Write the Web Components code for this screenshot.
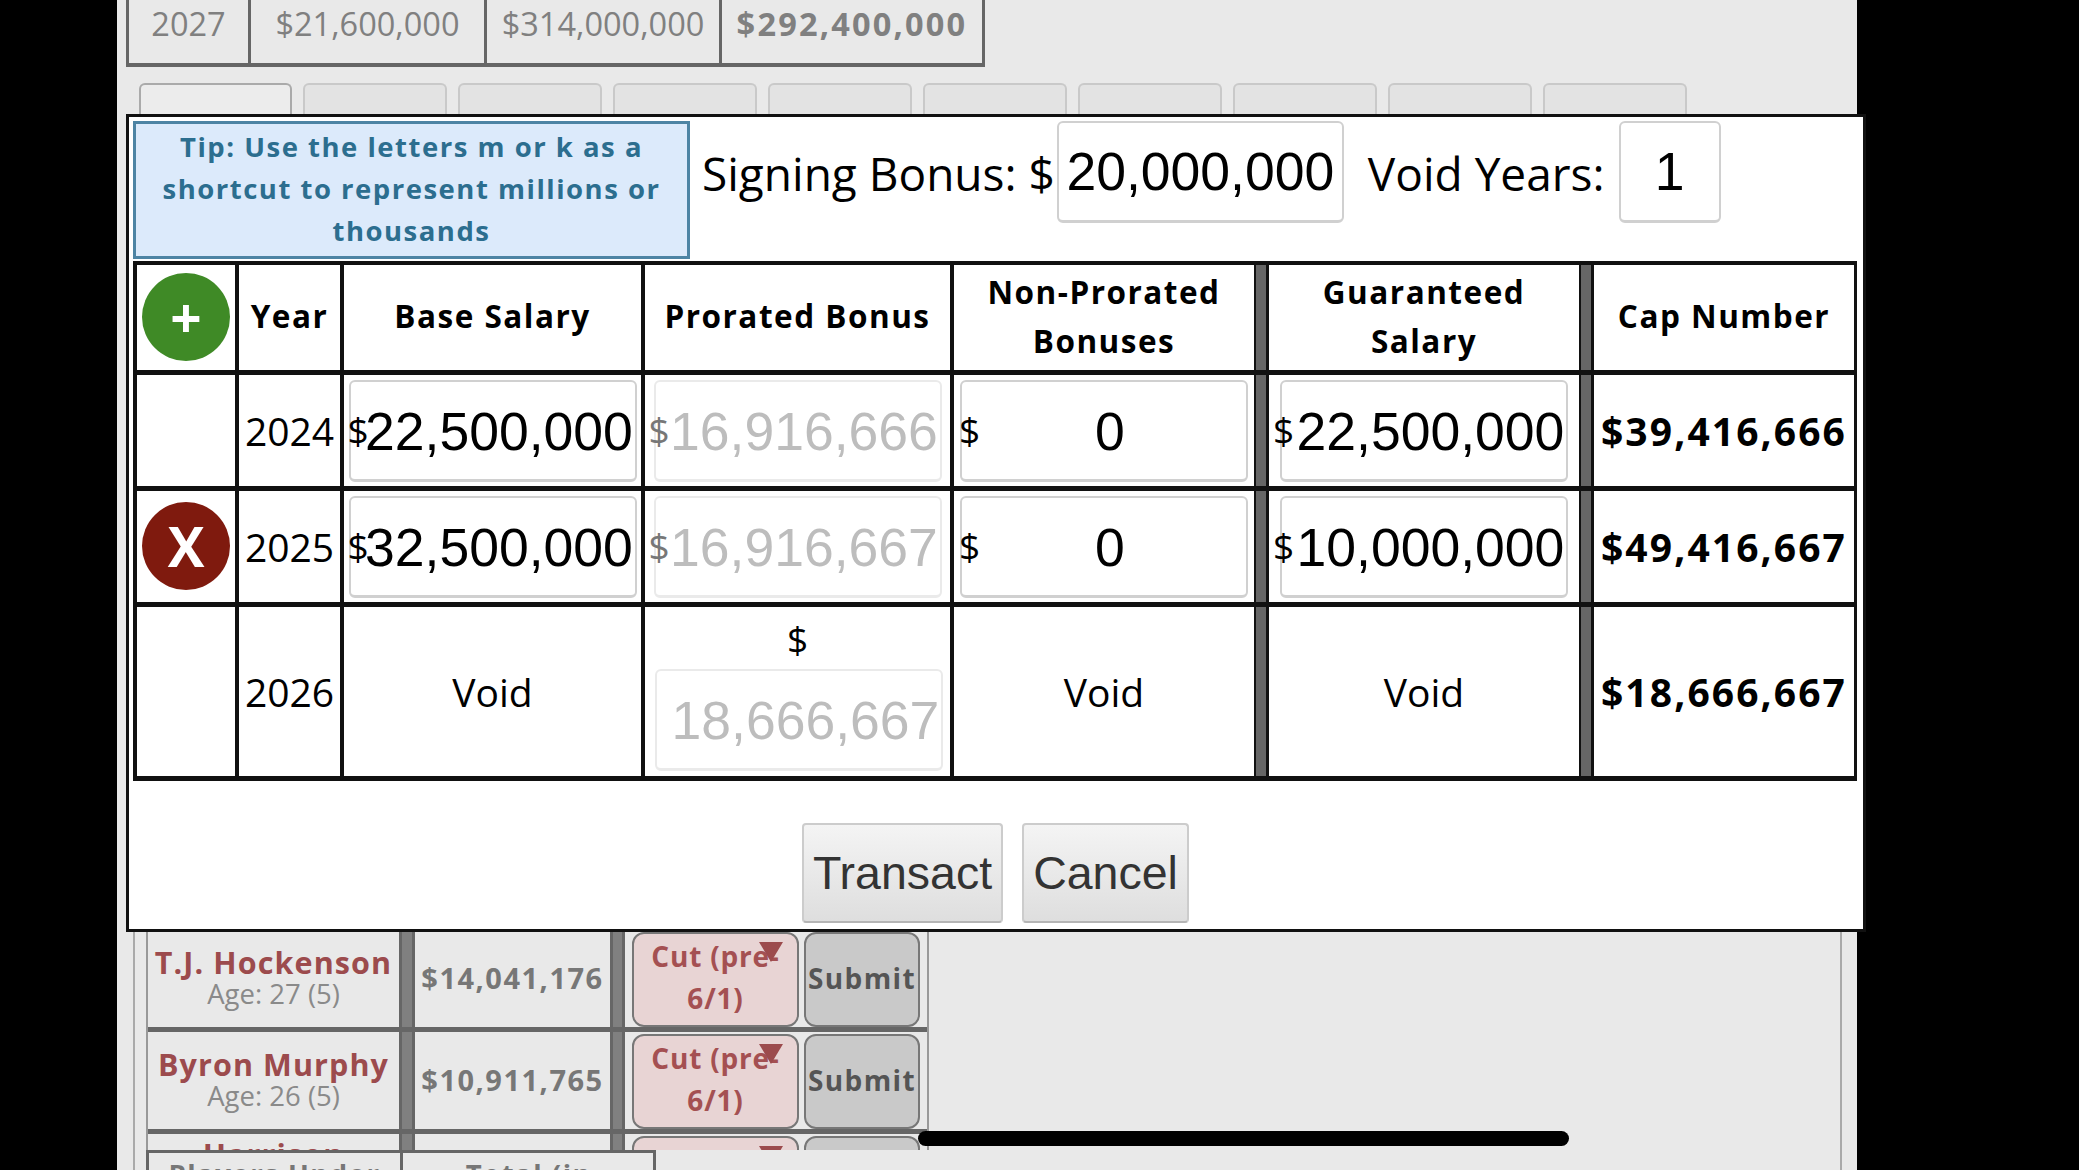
<!DOCTYPE html>
<html>
<head>
<meta charset="utf-8">
<title>Contract editor</title>
<style>
  html, body { margin: 0; height: 100%; background: #000; overflow: hidden; }
  body { font-family: "Open Sans", sans-serif; }
</style>
</head>
<body>
<cap-page>
  <cap-summary slot="summary"></cap-summary>
  <cap-tabs slot="tabs"></cap-tabs>
  <player-list slot="list">
    <player-row name="T.J. Hockenson" age="Age: 27 (5)" salary="$14,041,176"></player-row>
    <player-row name="Byron Murphy" age="Age: 26 (5)" salary="$10,911,765"></player-row>
    <player-row name="Harrison"></player-row>
  </player-list>
  <contract-modal slot="modal">
    <contract-row kind="head">
      <round-button color="#3f8a26" label="+"></round-button>
      <b>Year</b><b>Base Salary</b><b>Prorated Bonus</b><b>Non-Prorated Bonuses</b><i></i><b>Guaranteed Salary</b><i></i><b>Cap Number</b>
    </contract-row>
    <contract-row>
      <span></span><span>2024</span>
      <money-input value="22,500,000"></money-input>
      <money-input value="16,916,666" disabled nudge="4"></money-input>
      <money-input value="0"></money-input><i></i>
      <money-input value="22,500,000" nudge="6"></money-input><i></i>
      <strong>$39,416,666</strong>
    </contract-row>
    <contract-row>
      <round-button color="#7f1a0e" label="X"></round-button><span>2025</span>
      <money-input value="32,500,000"></money-input>
      <money-input value="16,916,667" disabled nudge="4"></money-input>
      <money-input value="0"></money-input><i></i>
      <money-input value="10,000,000" nudge="6"></money-input><i></i>
      <strong>$49,416,667</strong>
    </contract-row>
    <contract-row kind="void">
      <span></span><span>2026</span><span>Void</span>
      <money-input value="18,666,667" disabled stacked></money-input>
      <span>Void</span><i></i><span>Void</span><i></i>
      <strong>$18,666,667</strong>
    </contract-row>
  </contract-modal>
</cap-page>

<script>
  // outer page: dimmed sheet behind the modal, black bars either side
  class CapPage extends HTMLElement {
    constructor() {
      super();
      this.attachShadow({ mode: "open" });
      this.shadowRoot.innerHTML = `
<style>
:host { display: block; position: relative; width: 1740px; height: 1170px; margin-left: 117px; }
.wrap { display: flex; flex-direction: column; height: 100%; background: #e9e9e9; overflow: hidden; }
.pill { position: absolute; left: 801px; top: 1131px; width: 651px; height: 15px; border-radius: 8px; background: #000; }
</style>
<div class="wrap">
  <slot name="summary"></slot>
  <slot name="tabs"></slot>
  <slot name="list"></slot>
</div>
<slot name="modal"></slot>
<div class="pill"></div>`;
    }
  }

  class CapSummary extends HTMLElement {
    constructor() {
      super();
      this.attachShadow({ mode: "open" });
      this.shadowRoot.innerHTML = `
<style>
:host { display: grid; grid-template-columns: 122px 236px 235px 1fr; width: 859px; height: 67px; flex: none; margin-left: 9px; box-sizing: border-box; border-bottom: 4px solid #666; border-left: 3px solid #666; border-right: 3px solid #666; color: #808080; font-size: 32.5px; }
div { display: flex; justify-content: center; padding-bottom: 16px; align-items: center; border-right: 3px solid #666; }
div:last-child { border-right: 0; font-weight: 700; letter-spacing: 2.2px; }
</style>
<div>2027</div><div>$21,600,000</div><div>$314,000,000</div><div>$292,400,000</div>`;
    }
  }

  class CapTabs extends HTMLElement {
    constructor() {
      super();
      this.attachShadow({ mode: "open" });
      let tabs = "";
      for (let i = 0; i < 10; i++) tabs += `<div class="${i == 0 ? "on" : ""}"></div>`;
      this.shadowRoot.innerHTML = `
<style>
:host { display: flex; flex: none; gap: 12px; height: 31px; margin: 16px 0 0 22px; }
div { width: 144px; height: 31px; box-sizing: border-box; background: #e3e3e3; border: 2px solid #c9c9c9; border-bottom: 0; border-radius: 6px 6px 0 0; margin-right: -1px; }
.on { width: 153px; background: #ececec; border-color: #aaa; }
</style>${tabs}`;
    }
  }

  class PlayerList extends HTMLElement {
    constructor() {
      super();
      this.attachShadow({ mode: "open" });
      this.shadowRoot.innerHTML = `
<style>
:host { display: block; position: relative; flex: 1; margin: 0 15px 0 16px; border-left: 2px solid #aaa; border-right: 2px solid #aaa; overflow: hidden; }
.tbl { width: 783px; margin-left: 11px; padding-top: 816px; box-sizing: border-box; border-right: 2px solid #999; border-left: 2px solid #999; }
.foot { position: absolute; left: 11px; right: 0; top: 1036px; bottom: 0; background: #e9e9e9; }
.foot div { display: grid; grid-template-columns: 251px 255px; width: 510px; box-sizing: border-box; border: 3px solid #666; border-bottom: 0; height: 30px; color: #777; font-weight: 700; font-size: 27.5px; letter-spacing: 1.5px; }
.foot span { text-align: center; white-space: nowrap; overflow: hidden; line-height: 42px; height: 30px; }
.foot span + span { border-left: 3px solid #666; }
</style>
<div class="tbl"><slot></slot></div>
<div class="foot"><div><span>Players Under</span><span>Total (in</span></div></div>`;
    }
  }

  class PlayerRow extends HTMLElement {
    constructor() {
      super();
      this.attachShadow({ mode: "open" });
      // the last row runs under the sticky footer, only its top shows
      const full = this.hasAttribute("salary");
      this.shadowRoot.innerHTML = `
<style>
:host { display: grid; grid-template-columns: 251px 16px 195px 15px 1fr; height: 97px; padding-bottom: 5px; background: linear-gradient(#666, #666) bottom / 100% 5px no-repeat; color: #777; }
.who { display: flex; flex-direction: column; align-items: center; justify-content: ${full ? "center" : "flex-start"}; padding: ${full ? "0 0 4px" : "3px 0 0"}; }
.who b { color: #9c4b4d; font-size: 30.5px; line-height: 34px; letter-spacing: 1.1px; white-space: nowrap; }
.who span { color: #8a8a8a; font-size: 27.5px; line-height: 30px; }
.bar { background: #808080; border-left: 3px solid #666; border-right: 3px solid #666; box-sizing: border-box; }
.sal { display: flex; align-items: center; justify-content: center; font-weight: 700; font-size: 29px; letter-spacing: 1.5px; padding-bottom: 2px; }
.act { display: flex; gap: 5px; padding: 2px 0 0 7px; }
.sel { position: relative; width: 167px; box-sizing: border-box; background: #e8d4d4; border: 2px solid #777; border-radius: 12px; color: #a45052; font-weight: 700; font-size: 28px; line-height: 42px; text-align: center; letter-spacing: .8px; padding-top: 1px; }
.sel::after { content: ""; position: absolute; right: 14px; top: 8px; border: 12px solid transparent; border-top: 20px solid #9c4b4d; border-bottom: 0; }
.sub { width: 116px; box-sizing: border-box; background: #c9c9c9; border: 2px solid #777; border-radius: 12px; color: #555; font-weight: 700; font-size: 28px; letter-spacing: 1.4px; display: flex; align-items: center; justify-content: center; padding-bottom: 4px; }
</style>
<div class="who"><b>${this.getAttribute("name")}</b>${full ? `<span>${this.getAttribute("age")}</span>` : ""}</div>
<div class="bar"></div>
<div class="sal">${full ? this.getAttribute("salary") : ""}</div>
<div class="bar"></div>
<div class="act"><div class="sel">${full ? "Cut (pre-6/1)" : ""}</div><div class="sub">${full ? "Submit" : ""}</div></div>`;
    }
  }

  // the modal sits over the sheet
  class ContractModal extends HTMLElement {
    constructor() {
      super();
      this.attachShadow({ mode: "open" });
      this.shadowRoot.innerHTML = `
<style>
:host { display: flex; flex-direction: column; position: absolute; left: 9px; top: 114px; width: 1740px; height: 818px; box-sizing: border-box; background: #fff; border: 3px solid #111; padding: 4px 8px 0 4px; color: #000; }
.top { display: flex; align-items: flex-start; height: 140px; }
.tip { width: 557px; height: 138px; box-sizing: border-box; background: #dceafb; border: 3px solid #4d84a4; color: #2c6e8f; font-weight: 700; font-size: 27.5px; letter-spacing: 1.5px; line-height: 42px; text-align: center; padding: 2px 8px 0; }
.lbl { font-size: 46px; margin: 0; line-height: 104px; white-space: nowrap; }
.box { box-sizing: border-box; height: 102px; border: 2px solid #d0d0d0; border-bottom-width: 3px; border-radius: 6px; font-family: "Liberation Sans", Arial, sans-serif; font-size: 53.5px; display: flex; align-items: center; justify-content: center; }
.tbl { border: 4px solid #111; border-right-width: 3px; border-bottom: 0; width: 1724px; box-sizing: border-box; }
.btns { display: flex; justify-content: center; gap: 19px; margin-top: 42px; padding-left: 3px; }
.btn { box-sizing: border-box; height: 100px; display: flex; align-items: center; justify-content: center; background: linear-gradient(#f4f4f4, #dedede); border: 2px solid #ccc; border-bottom-color: #b5b5b5; border-radius: 4px; font-family: "Liberation Sans", Arial, sans-serif; font-size: 46.5px; color: #333; }
</style>
<div class="top">
  <div class="tip">Tip: Use the letters m or k as a shortcut to represent millions or thousands</div>
  <div class="lbl" style="margin-left:12px">Signing Bonus: $</div>
  <div class="box" style="width:287px;margin-left:2px">20,000,000</div>
  <div class="lbl" style="margin-left:24px">Void Years:</div>
  <div class="box" style="width:102px;margin-left:14px">1</div>
</div>
<div class="tbl"><slot></slot></div>
<div class="btns"><div class="btn" style="width:201px">Transact</div><div class="btn" style="width:167px">Cancel</div></div>`;
    }
  }

  class ContractRow extends HTMLElement {
    constructor() {
      super();
      this.attachShadow({ mode: "open" });
      const kind = this.getAttribute("kind");
      const h = kind == "head" ? 110 : kind == "void" ? 174 : 116;
      this.shadowRoot.innerHTML = `
<style>
:host { display: grid; grid-template-columns: 102px 105px 301px 309px 300px 15px 310px 15px 260px; height: ${h}px; box-sizing: border-box; border-bottom: 5px solid #111; font-size: 39px; }
::slotted(*) { display: flex; align-items: center; justify-content: center; text-align: center; box-sizing: border-box; font-style: normal; }
::slotted(:nth-child(-n+4)) { border-right: 4px solid #111; }
::slotted(i) { background: #666; border-left: 2px solid #111; border-right: 3px solid #111; }
::slotted(b) { font-size: 31.5px; letter-spacing: 1.5px; line-height: 49px; padding: 0 6px 4px; font-weight: 700; }
::slotted(strong) { font-size: 39px; letter-spacing: 2.1px; white-space: nowrap; font-weight: 700; }
</style>
<slot></slot>`;
    }
  }

  class RoundButton extends HTMLElement {
    constructor() {
      super();
      this.attachShadow({ mode: "open" });
      this.shadowRoot.innerHTML = `
<style>
:host { display: flex; }
div { width: 88px; height: 88px; border-radius: 50%; background: ${this.getAttribute("color")}; color: #fff; font-weight: 700; font-size: 55px; line-height: 88px; text-align: center; margin-bottom: 1px; }
</style>
<div>${this.getAttribute("label")}</div>`;
    }
  }

  class MoneyInput extends HTMLElement {
    constructor() {
      super();
      this.attachShadow({ mode: "open" });
      const off = this.hasAttribute("disabled");
      const stacked = this.hasAttribute("stacked");
      const long = this.getAttribute("value").length > 1;
      const nudge = Number(this.getAttribute("nudge") || 0);
      this.shadowRoot.innerHTML = `
<style>
:host { display: flex; flex-direction: ${stacked ? "column" : "row"}; padding-left: 3px; }
.cur { font-size: 37px; z-index: 1; ${stacked ? `line-height: 46px; margin: 4px 0 7px; padding-right: 3px;` : `width: 20px; margin-left: ${-4 - nudge}px; margin-right: ${-19 + nudge}px; padding-bottom: 2px;`} color: ${off && !stacked ? "#777" : "#000"}; }
.box { box-sizing: border-box; width: 288px; height: 102px; border: 2px solid ${off ? "#eaeaea" : "#d0d0d0"}; border-bottom-width: 3px; border-radius: 6px; font-family: "Liberation Sans", Arial, sans-serif; font-size: 53.5px; color: ${off ? "#bdbdbd" : "#000"}; display: flex; align-items: center; justify-content: center; white-space: nowrap; padding: 2px 0 0 ${long ? 13 : 12}px; }
</style>
<span class="cur">$</span><div class="box">${this.getAttribute("value")}</div>`;
    }
  }

  customElements.define("cap-page", CapPage);
  customElements.define("cap-summary", CapSummary);
  customElements.define("cap-tabs", CapTabs);
  customElements.define("player-list", PlayerList);
  customElements.define("player-row", PlayerRow);
  customElements.define("contract-modal", ContractModal);
  customElements.define("contract-row", ContractRow);
  customElements.define("round-button", RoundButton);
  customElements.define("money-input", MoneyInput);
</script>
</body>
</html>
